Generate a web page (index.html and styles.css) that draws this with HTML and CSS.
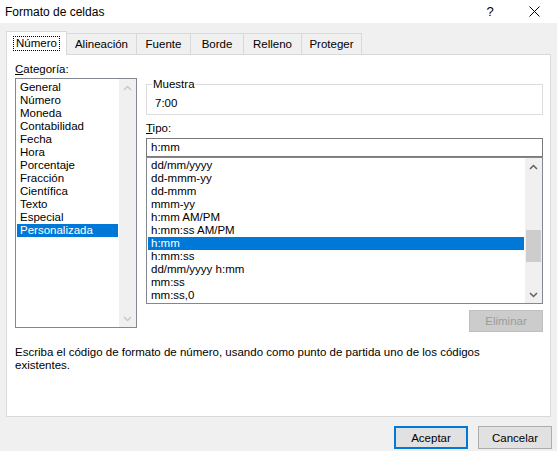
FILE: index.html
```
<html>
	<head>
		<link rel="stylesheet" href="styles.css">
	</head>

	<body>
		<div class="titlebar">
			<span class="title">Formato de celdas</span>
			<span class="help">?</span>
			<span class="close">
				<svg width="11" height="11" viewBox="0 0 11 11"><path d="M0.5 0.5 L10.5 10.5 M10.5 0.5 L0.5 10.5" stroke="#000" stroke-width="1" fill="none"/></svg>
			</span>
		</div>

		<div class="tabs">
			<div class="tab active"><span class="focus">Número</span></div>
			<div class="tab w-alin">Alineación</div>
			<div class="tab w-fuente">Fuente</div>
			<div class="tab w-borde">Borde</div>
			<div class="tab w-relleno">Relleno</div>
			<div class="tab w-proteger">Proteger</div>
		</div>

		<div class="panel">
			<div class="cols">
				<div class="left">
					<div class="label"><u>C</u>ategoría:</div>
					<div class="listbox cat">
						<div class="items">
							<div class="item">General</div>
							<div class="item">Número</div>
							<div class="item">Moneda</div>
							<div class="item">Contabilidad</div>
							<div class="item">Fecha</div>
							<div class="item">Hora</div>
							<div class="item">Porcentaje</div>
							<div class="item">Fracción</div>
							<div class="item">Científica</div>
							<div class="item">Texto</div>
							<div class="item">Especial</div>
							<div class="item sel">Personalizada</div>
						</div>
						<div class="scroll off">
							<div class="arrow"><svg width="9" height="6" viewBox="0 0 9 6"><polyline points="1,5 4.5,1.5 8,5" fill="none" stroke="currentColor" stroke-width="1.5"/></svg></div>
							<div class="track"></div>
							<div class="arrow"><svg width="9" height="6" viewBox="0 0 9 6"><polyline points="1,1 4.5,4.5 8,1" fill="none" stroke="currentColor" stroke-width="1.5"/></svg></div>
						</div>
					</div>
				</div>

				<div class="right">
					<fieldset class="sample">
						<legend>Muestra</legend>
						<div>7:00</div>
					</fieldset>

					<div class="label tipo"><u>T</u>ipo:</div>
					<div class="input">h:mm</div>

					<div class="listbox types">
						<div class="items">
							<div class="item">dd/mm/yyyy</div>
							<div class="item">dd-mmm-yy</div>
							<div class="item">dd-mmm</div>
							<div class="item">mmm-yy</div>
							<div class="item">h:mm AM/PM</div>
							<div class="item">h:mm:ss AM/PM</div>
							<div class="item sel">h:mm</div>
							<div class="item">h:mm:ss</div>
							<div class="item">dd/mm/yyyy h:mm</div>
							<div class="item">mm:ss</div>
							<div class="item">mm:ss,0</div>
						</div>
						<div class="scroll">
							<div class="arrow"><svg width="9" height="6" viewBox="0 0 9 6"><polyline points="1,5 4.5,1.5 8,5" fill="none" stroke="currentColor" stroke-width="1.5"/></svg></div>
							<div class="track"><div class="thumb"></div></div>
							<div class="arrow"><svg width="9" height="6" viewBox="0 0 9 6"><polyline points="1,1 4.5,4.5 8,1" fill="none" stroke="currentColor" stroke-width="1.5"/></svg></div>
						</div>
					</div>

					<div class="btn-row">
						<button class="btn disabled">Eliminar</button>
					</div>
				</div>
			</div>

			<p class="desc">Escriba el código de formato de número, usando como punto de partida uno de los códigos existentes.</p>
		</div>

		<div class="footer">
			<button class="btn default">Aceptar</button>
			<button class="btn">Cancelar</button>
		</div>
	</body>
</html>
```

FILE: styles.css
```
*{
	margin:0;
	padding:0;
	box-sizing:border-box;
}
body{
	width:557px;
	height:451px;
	overflow:hidden;
	background:#f0f0f0;
	font-family:"Liberation Sans", Arial, sans-serif;
	font-size:11.5px;
	color:#000;
}

/* barra de titulo */
.titlebar{
	height:23px;
	background:#fff;
	display:flex;
	align-items:center;
	padding-left:5px;
	font-size:12px;
}
.title{
	flex:1;
}
.help{
	width:30px;
	margin-right:6px;
	text-align:center;
	font-size:13px;
}
.close{
	width:46px;
	display:flex;
	justify-content:center;
	align-items:center;
}

/* pestañas */
.tabs{
	display:flex;
	align-items:flex-end;
	padding:8px 6px 0;
	margin-bottom:-1px;
	position:relative;
	z-index:1;
}
.tab{
	height:22px;
	line-height:20px;
	text-align:center;
	border:1px solid #d9d9d9;
	border-left:none;
	background:#f0f0f0;
}
.tab.active{
	width:61px;
	height:24px;
	background:#fff;
	border-left:1px solid #d9d9d9;
	border-bottom:none;
	padding-top:5px;
	line-height:13px;
}
.focus{
	outline:1px dotted #000;
	padding:0 2px;
	display:inline-block;
	line-height:13px;
}
.w-alin{ width:70px; }
.w-fuente{ width:54px; }
.w-borde{ width:53px; }
.w-relleno{ width:58px; }
.w-proteger{ width:60px; }

/* panel */
.panel{
	margin:0 6px 0 6px;
	width:545px;
	height:363px;
	background:#fff;
	border:1px solid #d9d9d9;
	padding:8px 7px 0 8px;
}
.cols{
	display:flex;
	gap:9px;
}
.label{
	line-height:13px;
	margin-bottom:2px;
}
.listbox{
	display:flex;
	border:1px solid #828790;
	background:#fff;
}
.items{
	flex:1;
	padding:1px;
}
.item{
	height:13px;
	line-height:13px;
	padding-left:3px;
	white-space:nowrap;
}
.item.sel{
	background:#0078d7;
	color:#fff;
}
.cat{
	width:122px;
	height:250px;
}
.cat .items{
	padding-top:2px;
}
.scroll{
	width:17px;
	background:#f0f0f0;
	display:flex;
	flex-direction:column;
	color:#606060;
}
.scroll.off{
	color:#c8c8c8;
}
.arrow{
	height:17px;
	display:flex;
	align-items:center;
	justify-content:center;
}
.track{
	flex:1;
}
.thumb{
	margin:55px 1px 0;
	height:32px;
	background:#cdcdcd;
}

.right{
	width:397px;
}
.sample{
	margin-top:15px;
	border:1px solid #dcdcdc;
	padding:6px 8px 4px;
	line-height:13px;
}
.sample legend{
	margin-left:-3px;
	padding:0 1px;
	line-height:13px;
}
.tipo{
	margin-top:7px;
	margin-bottom:3px;
}
.input{
	height:19px;
	border:1px solid #7a7a7a;
	padding-left:4px;
	line-height:17px;
}
.types{
	height:147px;
}

/* botones */
.btn{
	width:74px;
	height:22px;
	font-family:inherit;
	font-size:11.5px;
	background:#e1e1e1;
	border:1px solid #adadad;
	color:#000;
}
.btn.disabled{
	background:#cccccc;
	border-color:#bfbfbf;
	color:#9b9b9b;
}
.btn-row{
	display:flex;
	justify-content:flex-end;
	margin-top:6px;
}
.btn.default{
	border:2px solid #0078d7;
}
.desc{
	margin-top:14px;
	line-height:13px;
	width:500px;
}
.footer{
	display:flex;
	justify-content:flex-end;
	gap:10px;
	padding:9px 5px 0 0;
}
.footer .btn{
	height:23px;
}
```
